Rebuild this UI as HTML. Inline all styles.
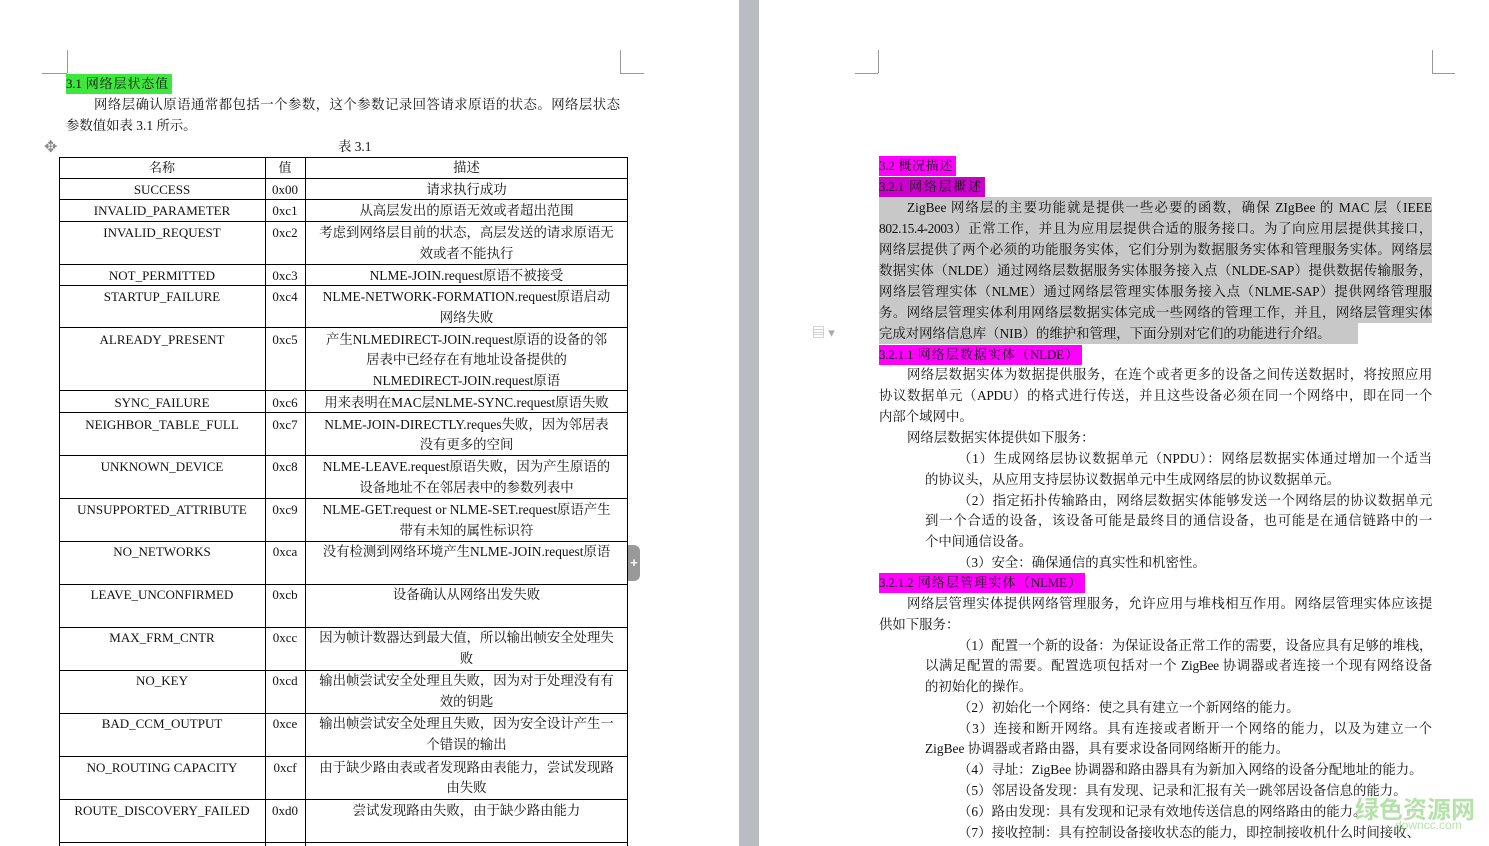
<!DOCTYPE html>
<html><head><meta charset="utf-8">
<style>
body{margin:0;width:1489px;height:846px;overflow:hidden;background:#fff;position:relative;font-family:"Liberation Serif","Noto Serif CJK SC",serif;font-size:13.4px;color:#111}
.l{position:absolute;white-space:nowrap;line-height:20px;height:20px;margin-top:3px}
.j{text-align:justify;text-align-last:justify}
.c{text-align:center}
.h{position:absolute;background:#000}
.v{position:absolute;background:#000;width:1px}
.g{background:#c8c8c8}
.m{background:#f0f}
.m2{background:#c0c}
.mk{position:absolute;background:#999}
.hd{font-size:13px;letter-spacing:-0.2px;text-align:justify;text-align-last:justify;padding-right:4px;box-sizing:border-box}
</style></head><body>
<div style="position:absolute;left:739px;top:0;width:20px;height:846px;background:#b9bcc3"></div>
<div class="mk" style="left:67px;top:50px;width:1px;height:23px"></div>
<div class="mk" style="left:42px;top:73px;width:25px;height:1px"></div>
<div class="mk" style="left:620px;top:50px;width:1px;height:23px"></div>
<div class="mk" style="left:620px;top:73px;width:24px;height:1px"></div>
<div class="mk" style="left:878px;top:50px;width:1px;height:23px"></div>
<div class="mk" style="left:855px;top:73px;width:23px;height:1px"></div>
<div class="mk" style="left:1432px;top:50px;width:1px;height:23px"></div>
<div class="mk" style="left:1432px;top:73px;width:23px;height:1px"></div>

<div class="l hd" style="left:66px;top:71px;width:106px;background:#3ee63e">3.1 网络层状态值</div>
<div class="l j" style="left:94px;top:92px;width:526px">网络层确认原语通常都包括一个参数，这个参数记录回答请求原语的状态。网络层状态</div>
<div class="l" style="left:66px;top:113px">参数值如表 3.1 所示。</div>
<div class="l" style="left:338px;top:134px">表 3.1</div>
<div class="l" style="left:44px;top:135px;color:#888;font-size:16px">✥</div>

<div class="v" style="left:59px;top:157px;height:689px"></div>
<div class="v" style="left:265px;top:157px;height:689px"></div>
<div class="v" style="left:305px;top:157px;height:689px"></div>
<div class="v" style="left:627px;top:157px;height:689px"></div>
<div class="h" style="left:59px;top:157px;width:569px;height:1px"></div>
<div class="h" style="left:59px;top:178px;width:569px;height:1px"></div>
<div class="h" style="left:59px;top:199px;width:569px;height:1px"></div>
<div class="h" style="left:59px;top:221px;width:569px;height:1px"></div>
<div class="h" style="left:59px;top:264px;width:569px;height:1px"></div>
<div class="h" style="left:59px;top:285px;width:569px;height:1px"></div>
<div class="h" style="left:59px;top:327px;width:569px;height:1px"></div>
<div class="h" style="left:59px;top:390px;width:569px;height:1px"></div>
<div class="h" style="left:59px;top:412px;width:569px;height:1px"></div>
<div class="h" style="left:59px;top:455px;width:569px;height:1px"></div>
<div class="h" style="left:59px;top:498px;width:569px;height:1px"></div>
<div class="h" style="left:59px;top:541px;width:569px;height:1px"></div>
<div class="h" style="left:59px;top:584px;width:569px;height:1px"></div>
<div class="h" style="left:59px;top:627px;width:569px;height:1px"></div>
<div class="h" style="left:59px;top:670px;width:569px;height:1px"></div>
<div class="h" style="left:59px;top:713px;width:569px;height:1px"></div>
<div class="h" style="left:59px;top:756px;width:569px;height:1px"></div>
<div class="h" style="left:59px;top:799px;width:569px;height:1px"></div>
<div class="h" style="left:59px;top:842px;width:569px;height:1px"></div>

<div style="position:absolute;left:59px;top:0;width:206px;font-size:13px">
<div class="l c" style="left:0;width:206px;top:155px">名称</div>
<div class="l c" style="left:0;width:206px;top:177px">SUCCESS</div>
<div class="l c" style="left:0;width:206px;top:198px">INVALID_PARAMETER</div>
<div class="l c" style="left:0;width:206px;top:220px">INVALID_REQUEST</div>
<div class="l c" style="left:0;width:206px;top:263px">NOT_PERMITTED</div>
<div class="l c" style="left:0;width:206px;top:284px">STARTUP_FAILURE</div>
<div class="l c" style="left:0;width:206px;top:327px">ALREADY_PRESENT</div>
<div class="l c" style="left:0;width:206px;top:390px">SYNC_FAILURE</div>
<div class="l c" style="left:0;width:206px;top:412px">NEIGHBOR_TABLE_FULL</div>
<div class="l c" style="left:0;width:206px;top:454px">UNKNOWN_DEVICE</div>
<div class="l c" style="left:0;width:206px;top:497px">UNSUPPORTED_ATTRIBUTE</div>
<div class="l c" style="left:0;width:206px;top:539px">NO_NETWORKS</div>
<div class="l c" style="left:0;width:206px;top:582px">LEAVE_UNCONFIRMED</div>
<div class="l c" style="left:0;width:206px;top:625px">MAX_FRM_CNTR</div>
<div class="l c" style="left:0;width:206px;top:668px">NO_KEY</div>
<div class="l c" style="left:0;width:206px;top:711px">BAD_CCM_OUTPUT</div>
<div class="l c" style="left:0;width:206px;top:755px">NO_ROUTING CAPACITY</div>
<div class="l c" style="left:0;width:206px;top:798px">ROUTE_DISCOVERY_FAILED</div>
</div>
<div style="position:absolute;left:265px;top:0;width:40px;font-size:13px">
<div class="l c" style="left:0;width:40px;top:155px">值</div>
<div class="l c" style="left:0;width:40px;top:177px">0x00</div>
<div class="l c" style="left:0;width:40px;top:198px">0xc1</div>
<div class="l c" style="left:0;width:40px;top:220px">0xc2</div>
<div class="l c" style="left:0;width:40px;top:263px">0xc3</div>
<div class="l c" style="left:0;width:40px;top:284px">0xc4</div>
<div class="l c" style="left:0;width:40px;top:327px">0xc5</div>
<div class="l c" style="left:0;width:40px;top:390px">0xc6</div>
<div class="l c" style="left:0;width:40px;top:412px">0xc7</div>
<div class="l c" style="left:0;width:40px;top:454px">0xc8</div>
<div class="l c" style="left:0;width:40px;top:497px">0xc9</div>
<div class="l c" style="left:0;width:40px;top:539px">0xca</div>
<div class="l c" style="left:0;width:40px;top:582px">0xcb</div>
<div class="l c" style="left:0;width:40px;top:625px">0xcc</div>
<div class="l c" style="left:0;width:40px;top:668px">0xcd</div>
<div class="l c" style="left:0;width:40px;top:711px">0xce</div>
<div class="l c" style="left:0;width:40px;top:755px">0xcf</div>
<div class="l c" style="left:0;width:40px;top:798px">0xd0</div>
</div>
<div style="position:absolute;left:306px;top:0;width:321px;font-size:13.4px">
<div class="l c" style="left:0;width:321px;top:155px">描述</div>
<div class="l c" style="left:0;width:321px;top:177px">请求执行成功</div>
<div class="l c" style="left:0;width:321px;top:198px">从高层发出的原语无效或者超出范围</div>
<div class="l c" style="left:0;width:321px;top:220px">考虑到网络层目前的状态，高层发送的请求原语无</div>
<div class="l c" style="left:0;width:321px;top:241px">效或者不能执行</div>
<div class="l c" style="left:0;width:321px;top:263px">NLME-JOIN.request原语不被接受</div>
<div class="l c" style="left:0;width:321px;top:284px">NLME-NETWORK-FORMATION.request原语启动</div>
<div class="l c" style="left:0;width:321px;top:305px">网络失败</div>
<div class="l c" style="left:0;width:321px;top:327px">产生NLMEDIRECT-JOIN.request原语的设备的邻</div>
<div class="l c" style="left:0;width:321px;top:347px">居表中已经存在有地址设备提供的</div>
<div class="l c" style="left:0;width:321px;top:368px">NLMEDIRECT-JOIN.request原语</div>
<div class="l c" style="left:0;width:321px;top:390px">用来表明在MAC层NLME-SYNC.request原语失败</div>
<div class="l c" style="left:0;width:321px;top:412px">NLME-JOIN-DIRECTLY.reques失败，因为邻居表</div>
<div class="l c" style="left:0;width:321px;top:432px">没有更多的空间</div>
<div class="l c" style="left:0;width:321px;top:454px">NLME-LEAVE.request原语失败，因为产生原语的</div>
<div class="l c" style="left:0;width:321px;top:475px">设备地址不在邻居表中的参数列表中</div>
<div class="l c" style="left:0;width:321px;top:497px">NLME-GET.request or NLME-SET.request原语产生</div>
<div class="l c" style="left:0;width:321px;top:518px">带有未知的属性标识符</div>
<div class="l c" style="left:0;width:321px;top:539px">没有检测到网络环境产生NLME-JOIN.request原语</div>
<div class="l c" style="left:0;width:321px;top:582px">设备确认从网络出发失败</div>
<div class="l c" style="left:0;width:321px;top:625px">因为帧计数器达到最大值，所以输出帧安全处理失</div>
<div class="l c" style="left:0;width:321px;top:646px">败</div>
<div class="l c" style="left:0;width:321px;top:668px">输出帧尝试安全处理且失败，因为对于处理没有有</div>
<div class="l c" style="left:0;width:321px;top:689px">效的钥匙</div>
<div class="l c" style="left:0;width:321px;top:711px">输出帧尝试安全处理且失败，因为安全设计产生一</div>
<div class="l c" style="left:0;width:321px;top:732px">个错误的输出</div>
<div class="l c" style="left:0;width:321px;top:755px">由于缺少路由表或者发现路由表能力，尝试发现路</div>
<div class="l c" style="left:0;width:321px;top:775px">由失败</div>
<div class="l c" style="left:0;width:321px;top:798px">尝试发现路由失败，由于缺少路由能力</div>
</div>
<div style="position:absolute;left:628px;top:545px;width:12px;height:36px;background:#999;border-radius:0 6px 6px 0;color:#fff;font:bold 13px 'Liberation Sans',sans-serif;line-height:36px;text-align:center">+</div>
<div class="l" style="left:812px;top:320px;color:#aaa;font-size:13px">▤ ▾</div>

<div class="l m hd" style="left:879px;top:153px;width:77px">3.2 概况描述</div>
<div class="l m2 hd" style="left:879px;top:174px;width:106px">3.2.1 网络层概述</div>
<div class="g" style="position:absolute;left:879px;top:197px;width:553px;height:126px"></div>
<div class="g" style="position:absolute;left:879px;top:323px;width:479px;height:21px"></div>
<div class="l j" style="left:907px;top:195px;width:525px">ZigBee 网络层的主要功能就是提供一些必要的函数，确保 ZIgBee 的 MAC 层（IEEE</div>
<div class="l j" style="left:879px;top:216px;width:553px;letter-spacing:-0.3px">802.15.4-2003）正常工作，并且为应用层提供合适的服务接口。为了向应用层提供其接口，</div>
<div class="l j" style="left:879px;top:237px;width:553px;letter-spacing:-0.3px">网络层提供了两个必须的功能服务实体，它们分别为数据服务实体和管理服务实体。网络层</div>
<div class="l j" style="left:879px;top:258px;width:553px;letter-spacing:-0.3px">数据实体（NLDE）通过网络层数据服务实体服务接入点（NLDE-SAP）提供数据传输服务，</div>
<div class="l j" style="left:879px;top:279px;width:553px;letter-spacing:-0.3px">网络层管理实体（NLME）通过网络层管理实体服务接入点（NLME-SAP）提供网络管理服</div>
<div class="l j" style="left:879px;top:300px;width:553px;letter-spacing:-0.3px">务。网络层管理实体利用网络层数据实体完成一些网络的管理工作，并且，网络层管理实体</div>
<div class="l" style="left:879px;top:321px">完成对网络信息库（NIB）的维护和管理，下面分别对它们的功能进行介绍。</div>
<div class="l m hd" style="left:879px;top:342px;width:203px">3.2.1.1 网络层数据实体（NLDE）</div>
<div class="l j" style="left:907px;top:362px;width:525px;letter-spacing:-0.3px">网络层数据实体为数据提供服务，在连个或者更多的设备之间传送数据时，将按照应用</div>
<div class="l j" style="left:879px;top:383px;width:553px;letter-spacing:-0.3px">协议数据单元（APDU）的格式进行传送，并且这些设备必须在同一个网络中，即在同一个</div>
<div class="l" style="left:879px;top:404px">内部个域网中。</div>
<div class="l" style="left:907px;top:425px">网络层数据实体提供如下服务：</div>
<div class="l j" style="left:958px;top:446px;width:474px">（1）生成网络层协议数据单元（NPDU）：网络层数据实体通过增加一个适当</div>
<div class="l" style="left:925px;top:467px">的协议头，从应用支持层协议数据单元中生成网络层的协议数据单元。</div>
<div class="l j" style="left:958px;top:488px;width:474px;letter-spacing:-0.4px">（2）指定拓扑传输路由，网络层数据实体能够发送一个网络层的协议数据单元</div>
<div class="l j" style="left:925px;top:508px;width:507px;letter-spacing:-0.3px">到一个合适的设备，该设备可能是最终目的通信设备，也可能是在通信链路中的一</div>
<div class="l" style="left:925px;top:529px">个中间通信设备。</div>
<div class="l" style="left:958px;top:550px">（3）安全：确保通信的真实性和机密性。</div>
<div class="l m hd" style="left:879px;top:570px;width:206px">3.2.1.2 网络层管理实体（NLME）</div>
<div class="l j" style="left:907px;top:591px;width:525px;letter-spacing:-0.3px">网络层管理实体提供网络管理服务，允许应用与堆栈相互作用。网络层管理实体应该提</div>
<div class="l" style="left:879px;top:612px">供如下服务：</div>
<div class="l j" style="left:958px;top:633px;width:474px;letter-spacing:-0.4px">（1）配置一个新的设备：为保证设备正常工作的需要，设备应具有足够的堆栈，</div>
<div class="l j" style="left:925px;top:653px;width:507px;letter-spacing:-0.3px">以满足配置的需要。配置选项包括对一个 ZigBee 协调器或者连接一个现有网络设备</div>
<div class="l" style="left:925px;top:674px">的初始化的操作。</div>
<div class="l" style="left:958px;top:695px">（2）初始化一个网络：使之具有建立一个新网络的能力。</div>
<div class="l j" style="left:958px;top:716px;width:474px">（3）连接和断开网络。具有连接或者断开一个网络的能力，以及为建立一个</div>
<div class="l" style="left:925px;top:736px">ZigBee 协调器或者路由器，具有要求设备同网络断开的能力。</div>
<div class="l" style="left:958px;top:757px">（4）寻址：ZigBee 协调器和路由器具有为新加入网络的设备分配地址的能力。</div>
<div class="l" style="left:958px;top:778px">（5）邻居设备发现：具有发现、记录和汇报有关一跳邻居设备信息的能力。</div>
<div class="l" style="left:958px;top:799px">（6）路由发现：具有发现和记录有效地传送信息的网络路由的能力。</div>
<div class="l" style="left:958px;top:820px">（7）接收控制：具有控制设备接收状态的能力，即控制接收机什么时间接收、</div>
<div class="l" style="left:1355px;top:791px;font:bold 24px 'Noto Sans CJK SC',sans-serif;color:rgba(120,200,100,0.55);line-height:28px;height:28px">绿色资源网</div>
<div class="l" style="left:1395px;top:815px;font:12px 'Liberation Sans',sans-serif;color:rgba(120,200,100,0.55)">downcc.com</div>
</body></html>
